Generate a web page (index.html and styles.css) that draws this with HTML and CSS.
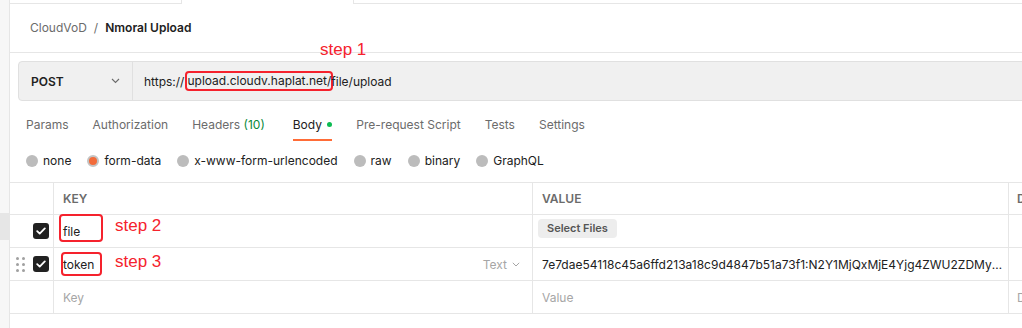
FILE: index.html
```html
<!DOCTYPE html>
<html lang="en">
<head>
    <meta charset="UTF-8">
    <title>CloudVoD / Nmoral Upload</title>
    <link rel="stylesheet" href="styles.css">
</head>
<body>
    <div class="app">
        <aside class="sidebar">
            <div class="sidebar-item"></div>
        </aside>

        <main class="main">
            <div class="tabstrip">
                <div class="tab-gap"></div>
                <div class="tab-active"></div>
                <div class="tab-fill"></div>
            </div>

            <div class="breadcrumb">
                <span class="crumb">CloudVoD</span>
                <span class="crumb-sep">/</span>
                <span class="crumb-current">Nmoral Upload</span>
            </div>

            <div class="request">
                <span class="note note-1">step 1</span>
                <div class="urlbar">
                    <div class="method">
                        <span>POST</span>
                        <svg class="chevron" width="9" height="6" viewBox="0 0 9 6"><path d="M1 1l3.5 3.5L8 1" fill="none" stroke="#6b6b6b" stroke-width="1.1"/></svg>
                    </div>
                    <div class="url">https://<span class="mark">upload.cloudv.haplat.net/</span>file/upload</div>
                </div>
            </div>

            <nav class="tabs">
                <span class="tab">Params</span>
                <span class="tab">Authorization</span>
                <span class="tab">Headers <em class="count">(10)</em></span>
                <span class="tab active">Body <i class="dot"></i></span>
                <span class="tab">Pre-request Script</span>
                <span class="tab">Tests</span>
                <span class="tab">Settings</span>
            </nav>

            <div class="body-types">
                <label class="option"><i class="radio"></i>none</label>
                <label class="option"><i class="radio on"></i>form-data</label>
                <label class="option"><i class="radio"></i>x-www-form-urlencoded</label>
                <label class="option"><i class="radio"></i>raw</label>
                <label class="option"><i class="radio"></i>binary</label>
                <label class="option"><i class="radio"></i>GraphQL</label>
            </div>

            <div class="params">
                <div class="cell head"></div>
                <div class="cell head">KEY</div>
                <div class="cell head">VALUE</div>
                <div class="cell head desc">DESCRIPTION</div>

                <div class="cell check">
                    <span class="box"><svg width="10" height="8" viewBox="0 0 10 8"><path d="M1.2 4.2l2.5 2.4L8.8 1.4" fill="none" stroke="#fff" stroke-width="1.8" stroke-linecap="round" stroke-linejoin="round"/></svg></span>
                </div>
                <div class="cell key">
                    file
                    <span class="ring ring-2"></span>
                    <span class="note note-2">step 2</span>
                </div>
                <div class="cell value">
                    <span class="file-btn">Select Files</span>
                </div>
                <div class="cell desc"></div>

                <div class="cell check">
                    <span class="handle"><i></i><i></i><i></i><i></i><i></i><i></i></span>
                    <span class="box"><svg width="10" height="8" viewBox="0 0 10 8"><path d="M1.2 4.2l2.5 2.4L8.8 1.4" fill="none" stroke="#fff" stroke-width="1.8" stroke-linecap="round" stroke-linejoin="round"/></svg></span>
                </div>
                <div class="cell key">
                    token
                    <span class="ring ring-3"></span>
                    <span class="note note-3">step 3</span>
                    <span class="type">Text <svg width="8" height="5" viewBox="0 0 8 5"><path d="M.8 .8L4 4 7.2 .8" fill="none" stroke="#a6a6a6" stroke-width="1"/></svg></span>
                </div>
                <div class="cell value"><span class="clip">7e7dae54118c45a6ffd213a18c9d4847b51a73f1:N2Y1MjQxMjE4Yjg4ZWU2ZDMyNTk0ZmQ3NTc1</span></div>
                <div class="cell desc"></div>

                <div class="cell check"></div>
                <div class="cell key placeholder">Key</div>
                <div class="cell value placeholder">Value</div>
                <div class="cell desc placeholder">Description</div>
            </div>
        </main>
    </div>
</body>
</html>
```

FILE: styles.css
```css
body {
    margin: 0;
    background-color: #fff;
    font-family: Inter, 'Noto Sans', sans-serif;
    font-size: 12px;
    color: #212121;
    overflow: hidden;
}
.app {
    display: flex;
    height: 328px;
}
.sidebar {
    width: 9px;
    flex: none;
    background-color: #f7f7f7;
    border-right: 1px solid #e6e6e6;
}
.sidebar-item {
    margin-top: 213px;
    height: 27px;
    background-color: #e6e6e6;
}
.main {
    flex: 1;
    min-width: 0;
    overflow: hidden;
    position: relative;
}

/* top tab strip */
.tabstrip {
    display: flex;
    height: 4px;
}
.tab-gap {
    width: 171px;
    border-bottom: 1px solid #e6e6e6;
}
.tab-active {
    width: 171px;
    border-left: 1px solid #e6e6e6;
    border-right: 1px solid #e6e6e6;
}
.tab-fill {
    flex: 1;
    border-bottom: 1px solid #e6e6e6;
}

.breadcrumb {
    height: 47px;
    display: flex;
    align-items: center;
    padding-left: 20px;
    padding-bottom: 1px;
    font-size: 12px;
    border-bottom: 1px solid #e6e6e6;
}
.crumb {
    color: #6b6b6b;
}
.crumb-sep {
    color: #6b6b6b;
    margin: 0 7px;
}
.crumb-current {
    font-weight: 600;
}

/* url bar */
.request {
    padding-top: 8px;
    padding-left: 8px;
    margin-right: -12px;
}
.urlbar {
    display: flex;
    height: 38px;
    background-color: #f0f0f0;
    border: 1px solid #e0e0e0;
    border-radius: 4px;
}
.method {
    width: 114px;
    box-sizing: border-box;
    padding: 0 12px;
    display: flex;
    align-items: center;
    justify-content: space-between;
    font-weight: 600;
    border-right: 1px solid #e0e0e0;
}
.url {
    flex: 1;
    display: flex;
    align-items: center;
    padding-left: 11px;
    white-space: pre;
}
.mark {
    line-height: 14px;
    padding: 1px 0;
    margin-left: 1px;
    margin-right: -2px;
    border: 2px solid #f5222d;
    border-radius: 4px;
}

.note {
    position: absolute;
    font-family: 'Liberation Sans', Arial, sans-serif;
    font-size: 17px;
    line-height: 20px;
    color: #f5222d;
    white-space: nowrap;
}
.note-1 {
    left: 310px;
    top: 40px;
}

/* request tabs */
.tabs {
    display: flex;
    padding-left: 4px;
}
.tab {
    padding: 16px 12px 6px;
    line-height: 16px;
    color: #6b6b6b;
    border-bottom: 2px solid transparent;
}
.tab.active {
    color: #212121;
    border-bottom-color: #ff6c37;
    padding: 16px 0 6px;
    margin: 0 12px 0 16px;
}
.count {
    font-style: normal;
    color: #0a8a3a;
}
.dot {
    display: inline-block;
    width: 5px;
    height: 5px;
    border-radius: 50%;
    background-color: #0cbb52;
    margin-left: 2px;
    vertical-align: 2px;
}

.body-types {
    display: flex;
    gap: 16px;
    padding: 12px 0 13px 16px;
    line-height: 16px;
}
.option {
    display: flex;
    align-items: center;
    gap: 5px;
}
.radio {
    width: 12px;
    height: 12px;
    box-sizing: border-box;
    border-radius: 50%;
    background-color: #bcbcbc;
}
.radio.on {
    background-color: #f26b3a;
    border: 2.5px solid #c4c4c4;
}

/* key / value table */
.params {
    display: grid;
    grid-template-columns: 44px 479px 476px 200px;
    border-top: 1px solid #e6e6e6;
    width: 1199px;
}
.cell {
    height: 32px;
    box-sizing: border-box;
    border-right: 1px solid #e6e6e6;
    border-bottom: 1px solid #e6e6e6;
    display: flex;
    align-items: center;
    padding: 0 9px;
    position: relative;
    white-space: nowrap;
}
.cell.head {
    font-weight: 600;
    color: #6b6b6b;
    padding-bottom: 1px;
}
.params > .cell:nth-child(n+5) {
    height: 33px;
}
.cell.desc {
    padding-left: 8px;
}
.cell.check {
    justify-content: flex-end;
    gap: 8px;
    padding: 0 4px 0 0;
}
.box {
    width: 16px;
    height: 16px;
    border-radius: 3px;
    background-color: #212121;
    display: flex;
    align-items: center;
    justify-content: center;
}
.handle {
    display: grid;
    grid-template-columns: 3px 3px;
    gap: 3px 3px;
}
.handle i {
    width: 3px;
    height: 3px;
    border-radius: 50%;
    background-color: #a0a0a0;
}
.placeholder {
    color: #a6a6a6;
}
.type {
    margin-left: auto;
    color: #a6a6a6;
    display: flex;
    align-items: center;
    gap: 5px;
    padding-right: 3px;
}
.value {
    padding: 0 4px 0 9px;
}
.clip {
    overflow: hidden;
    text-overflow: ellipsis;
}
.file-btn {
    align-self: flex-start;
    margin: 4px 0 0 -4px;
    background-color: #ededed;
    border-radius: 4px;
    padding: 3px 9px;
    line-height: 13px;
    font-size: 11px;
    font-weight: 600;
    color: #555;
}

.ring {
    position: absolute;
    border: 2px solid #f5222d;
    border-radius: 4px;
    box-sizing: border-box;
}
.ring-2 {
    left: 5px;
    top: -1px;
    width: 44px;
    height: 28px;
}
.ring-3 {
    left: 7px;
    top: 4px;
    width: 41px;
    height: 24px;
}
.note-2 {
    left: 61px;
    top: 1px;
}
.note-3 {
    left: 61px;
    top: 4px;
}
```
